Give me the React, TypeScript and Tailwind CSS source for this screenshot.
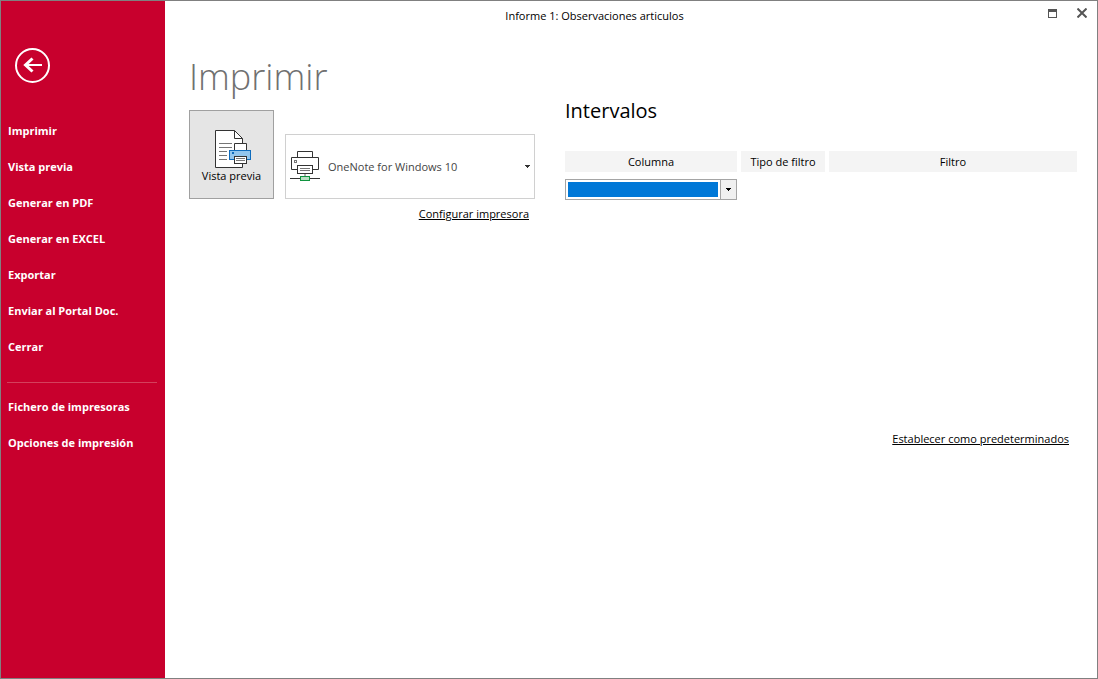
import React, { useState } from 'react';

const mainActions = [
  'Imprimir',
  'Vista previa',
  'Generar en PDF',
  'Generar en EXCEL',
  'Exportar',
  'Enviar al Portal Doc.',
  'Cerrar',
];

const settingsActions = ['Fichero de impresoras', 'Opciones de impresión'];

function BackIcon() {
  return (
    <svg width="35" height="35" viewBox="0 0 35 35" fill="none" stroke="#fff">
      <circle cx="17.5" cy="17.5" r="16.5" strokeWidth="2" />
      <path d="M10 17H27" strokeWidth="2" />
      <path d="M17.5 10.5L10.5 17L17.5 23.5" strokeWidth="3" />
    </svg>
  );
}

function PreviewIcon() {
  return (
    <svg width="39" height="38" viewBox="-3 0 39 38" fill="none" stroke="#333">
      <path d="M.5 .5H19.5L27.5 8.5V37.5H.5Z" fill="#fff" />
      <path d="M19.5 .5V8.5H27.5" />
      <path d="M4 13.5H17M4 17.5H17M4 21.5H12M4 25.5H12M4 29.5H12" stroke="#767676" />
      <path d="M19.5 20V13.5H31.5V20" fill="#fff" />
      <rect x="14.5" y="20.5" width="21" height="9" fill="#92c6ee" stroke="#0f6cbd" />
      <rect x="17" y="22" width="2" height="2" fill="#0f6cbd" stroke="none" />
      <rect x="19.5" y="26.5" width="12" height="7" fill="#fff" />
      <path d="M21 28.5H30M21 30.5H30" stroke="#767676" />
    </svg>
  );
}

function NetworkPrinterIcon() {
  return (
    <svg width="30" height="31" viewBox="0 0 30 31" fill="none" stroke="#333">
      <path d="M7.5 6V.5H22.5V6" />
      <path d="M7.5 18.5H1.5V6.5H28.5V18.5H22.5" />
      <rect x="4.5" y="9.5" width="2" height="2" stroke="#767676" />
      <rect x="7.5" y="14.5" width="15" height="8" />
      <path d="M10 17.5H20M10 19.5H20" stroke="#767676" />
      <path d="M15 23V25" stroke="#b0b0b0" strokeWidth="2" />
      <path d="M0 27.5H30" />
      <rect x="10.5" y="25.5" width="9" height="4" fill="#b9dfc3" stroke="#10933f" />
    </svg>
  );
}

function CaretIcon() {
  return (
    <svg width="5" height="3" viewBox="0 0 5 3" fill="currentColor" shapeRendering="crispEdges">
      <path d="M0 0H5V1H4V2H3V3H2V2H1V1H0Z" />
    </svg>
  );
}

function Sidebar() {
  return (
    <nav className="w-41 shrink-0 bg-[#c8002d] font-bold text-white">
      <button type="button" aria-label="Volver" className="mt-[47px] ml-3.5 block">
        <BackIcon />
      </button>
      <ul className="mt-[30px]">
        {mainActions.map((label) => (
          <li key={label}>
            <button type="button" className="block h-9 w-full px-[7px] text-left">
              {label}
            </button>
          </li>
        ))}
      </ul>
      <hr className="mt-[17px] mr-2 mb-1.5 ml-1.5 border-[#d4405c]" />
      <ul>
        {settingsActions.map((label) => (
          <li key={label}>
            <button type="button" className="block h-9 w-full px-[7px] text-left">
              {label}
            </button>
          </li>
        ))}
      </ul>
    </nav>
  );
}

function TitleBar() {
  return (
    <header className="flex h-7 items-center gap-6 pr-2.5">
      <h1 className="flex-1 pt-0.5 text-center">Informe 1: Observaciones articulos</h1>
      <div className="flex gap-5 pb-1">
        <button type="button" aria-label="Maximizar">
          <svg width="9" height="9" viewBox="0 0 9 9" fill="none" stroke="#555">
            <rect x=".5" y=".5" width="8" height="8" />
            <path d="M0 1.5H9" strokeWidth="3" />
          </svg>
        </button>
        <button type="button" aria-label="Cerrar ventana">
          <svg width="10" height="10" viewBox="0 0 10 10" stroke="#555" strokeWidth="2">
            <path d="M.5 .5L9.5 9.5M9.5 .5L.5 9.5" />
          </svg>
        </button>
      </div>
    </header>
  );
}

function PrinterPanel() {
  const [printer, setPrinter] = useState('OneNote for Windows 10');

  return (
    <section className="w-[346px] shrink-0">
      <h2 className="h-14 text-4xl leading-14 font-light text-[#707070]">Imprimir</h2>
      <div className="mt-[5px] flex items-end gap-[11px]">
        <button
          type="button"
          className="flex h-[89px] w-[85px] flex-col items-center border border-[#a0a0a0] bg-[#e5e5e5] pt-[19px]"
        >
          <PreviewIcon />
          Vista previa
        </button>
        <div className="relative flex-1">
          <select
            aria-label="Impresora"
            value={printer}
            onChange={(e) => setPrinter(e.target.value)}
            className="block h-[65px] w-full appearance-none border border-[#d0d0d0] bg-white pl-[42px] text-[#444]"
          >
            <option>OneNote for Windows 10</option>
          </select>
          <span className="pointer-events-none absolute inset-0 flex items-center justify-between px-[5px] text-[#333]">
            <NetworkPrinterIcon />
            <CaretIcon />
          </span>
        </div>
      </div>
      <div className="mt-[7px] pr-1.5 text-right">
        <a href="#configurar" className="underline">
          Configurar impresora
        </a>
      </div>
    </section>
  );
}

function RangesPanel() {
  const [column, setColumn] = useState('');

  return (
    <section className="min-w-0 flex-1 pt-[46px]">
      <h2 className="text-xl leading-8">Intervalos</h2>
      <div className="-mx-1 mt-6 h-[280px]">
        <table className="w-full table-fixed border-separate border-spacing-x-1 border-spacing-y-0">
          <thead>
            <tr className="h-[21px] bg-[#f4f4f4]">
              <th className="w-43 p-0 font-normal">Columna</th>
              <th className="w-21 p-0 font-normal">Tipo de filtro</th>
              <th className="p-0 font-normal">Filtro</th>
            </tr>
          </thead>
          <tbody>
            <tr>
              <td className="p-0 pt-[7px]">
                <label className="flex h-[21px] border border-[#a5a5a5]">
                  <select
                    aria-label="Columna"
                    value={column}
                    onChange={(e) => setColumn(e.target.value)}
                    className="min-w-0 flex-1 appearance-none border-2 border-white bg-[#0078d7] text-white"
                  >
                    <option value=""></option>
                  </select>
                  <span className="flex w-4 items-center justify-center border-l border-[#a5a5a5] bg-[#f0f0f0]">
                    <CaretIcon />
                  </span>
                </label>
              </td>
              <td />
              <td />
            </tr>
          </tbody>
        </table>
      </div>
      <div className="pr-2 text-right">
        <a href="#predeterminados" className="underline">
          Establecer como predeterminados
        </a>
      </div>
    </section>
  );
}

export default function App() {
  return (
    <div className="flex min-h-screen border border-[#808080] bg-white font-['Open_Sans','Noto_Sans',sans-serif] text-[11px] leading-4 text-black">
      <Sidebar />
      <main className="min-w-0 flex-1">
        <TitleBar />
        <div className="flex gap-[30px] pt-5 pr-5 pl-6">
          <PrinterPanel />
          <RangesPanel />
        </div>
      </main>
    </div>
  );
}
